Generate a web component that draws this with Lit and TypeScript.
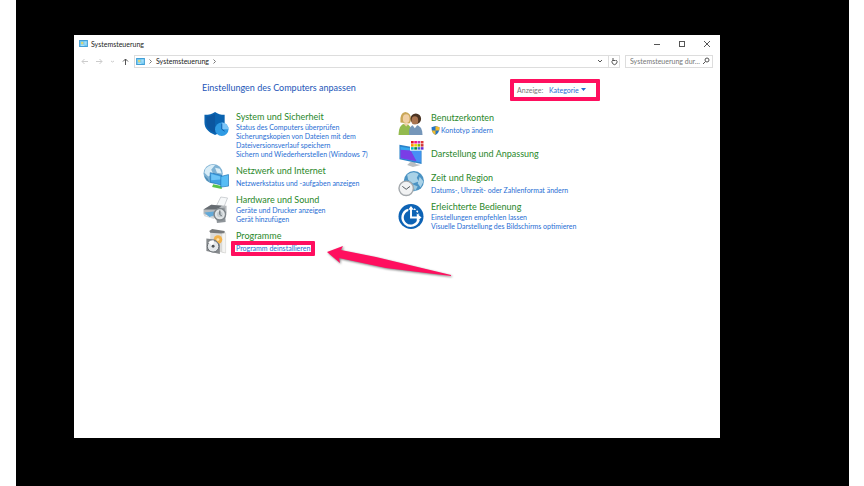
import { LitElement, html, svg, css, nothing, TemplateResult, SVGTemplateResult } from "lit";
import { customElement, property } from "lit/decorators.js";

interface Category {
  title: string;
  icon: string;
  links: string[];
  shield?: boolean;
  marked?: boolean;
  top?: boolean;
}

const LEFT: Category[] = [
  {
    title: "System und Sicherheit",
    icon: "security",
    top: true,
    links: [
      "Status des Computers überprüfen",
      "Sicherungskopien von Dateien mit dem Dateiversionsverlauf speichern",
      "Sichern und Wiederherstellen (Windows 7)",
    ],
  },
  { title: "Netzwerk und Internet", icon: "network", links: ["Netzwerkstatus und -aufgaben anzeigen"] },
  { title: "Hardware und Sound", icon: "hardware", links: ["Geräte und Drucker anzeigen", "Gerät hinzufügen"] },
  { title: "Programme", icon: "programs", links: ["Programm deinstallieren"], marked: true },
];

const RIGHT: Category[] = [
  { title: "Benutzerkonten", icon: "users", links: ["Kontotyp ändern"], shield: true },
  { title: "Darstellung und Anpassung", icon: "display", links: [] },
  { title: "Zeit und Region", icon: "clock", links: ["Datums-, Uhrzeit- oder Zahlenformat ändern"] },
  {
    title: "Erleichterte Bedienung",
    icon: "access",
    links: ["Einstellungen empfehlen lassen", "Visuelle Darstellung des Bildschirms optimieren"],
  },
];

const swatches = ["#e81123", "#f01a8c", "#c239b3", "#e23838", "#ff8c00", "#e8d100", "#7fba00", "#d13438", "#00b7c3", "#10893e", "#3b6be0", "#6b2fd0"];

const ICONS: Record<string, SVGTemplateResult> = {
  security: svg`
    <path d="M2 4 C7 4 10 3 13 1 C16 3 19 4 23 4 V12 C23 19 19 22 13 25 C6 22 2 18 2 12Z" fill="#0a63b0"/>
    <path d="M4 6 C8 5.500 10.500 4 13 3 V22.500 C7 20 4 17 4 12Z" fill="#0b56a0"/>
    <circle cx="20" cy="19" r="7" fill="#2f9be4"/>
    <path d="M20 12 A7 7 0 0 1 27 19 H20Z" fill="#7cc6f8"/>
    <path d="M20 13 V19 L23 21" stroke="#0b5cab" fill="none"/>`,
  network: svg`
    <circle cx="11" cy="10" r="10" fill="#7fb2d4"/>
    <path d="M3 5 Q8 0 13 1 L9 6 L11 10 L6 13 L2 9Z M13 4 L18 5 L20 10 L15 9Z" fill="#d9edf7"/>
    <path d="M2 12 Q6 15 7 19 Q3 17 2 12Z" fill="#4c8bb5"/>
    <path d="M11 21 L20 23 V26 L10 24Z" fill="#59c34a"/>
    <path d="M8 9 L20 12 V22 L8 19Z" fill="#3f9fe2" stroke="#1e74b8" stroke-width=".7"/>
    <path d="M19 13 L27 11 V23 L19 24Z" fill="#58bdf5" stroke="#1d74b8" stroke-width=".7"/>
    <path d="M9 10.500 L18.500 13 V16 L9 17Z" fill="#6cc4f7"/>`,
  hardware: svg`
    <path d="M14 10 L19 0 L26 1 L22 11Z" fill="#f7f9fa" stroke="#b9bec2" stroke-width=".7"/>
    <path d="M1 13 L9 8 L25 9 V17 L12 21 L1 18Z" fill="#b6babd"/>
    <path d="M1 13 L9 8 L20 9 L15 13Z" fill="#666c72"/>
    <path d="M2 16 L12 15 L15 18 L7 21Z" fill="#62a9d8"/>
    <path d="M1 18 L8 21 L12 20 V23 L2 20Z" fill="#d2d6d8"/>
    <path d="M13 13 L23 11 L24 26 L15 27Z" fill="#8f959a"/>
    <circle cx="18" cy="18" r="6" fill="#e0e4e6" stroke="#7f868b" stroke-width="1.500"/>
    <circle cx="18" cy="18" r="3" fill="#c5ccd0"/><path d="M18 14 V18 L20 20" stroke="#4e565b" fill="none"/>`,
  programs: svg`
    <path d="M8 3 L23 4 V25 L18 24 L8 22Z" fill="#dcdcda"/>
    <path d="M7 2 L10 0 L23 2 V5 L8 4Z" fill="#77797a"/>
    <path d="M20 5 L24 4 V25 L20 24Z" fill="#f4f4f2" stroke="#c9c9c7" stroke-width=".5"/>
    <circle cx="16" cy="11" r="4.500" fill="#f2b24a"/><circle cx="16" cy="11" r="1.500" fill="#fde3ae"/>
    <path d="M4 10 L13 11 L18 16 V26 L4 23Z" fill="#85898c"/>
    <circle cx="11" cy="18" r="6" fill="#e5e8ea" stroke="#64696d"/>
    <path d="M11 18 L6 14 A6 6 0 0 1 12 12Z" fill="#fff"/><circle cx="11" cy="18" r="1.500" fill="#505558"/>`,
  users: svg`
    <path d="M3 12 Q2 2 8 1 Q14 2 14 8 Q14 12 12 13Z" fill="#c9a758"/>
    <ellipse cx="9" cy="8" rx="3.500" ry="4.500" fill="#f0cfa4"/>
    <path d="M1 25 Q1 14 8 13 Q15 14 15 25Z" fill="#93ba4e"/>
    <path d="M6 13 L9 16 L12 13 Z" fill="#f0cfa4"/>
    <circle cx="19" cy="8" r="5.500" fill="#4a3323"/>
    <ellipse cx="18" cy="10" rx="3.500" ry="4.500" fill="#a97450"/>
    <path d="M12 25 Q11 15 18 14 Q26 15 26 25Z" fill="#7596b9"/>
    <path d="M15 14 L18 18 L21 14Z" fill="#fff"/>`,
  display: svg`
    <path d="M13 22 L18 21 L19 24 L24 25 L16 27 L10 25Z" fill="#b9bec2"/>
    <path d="M2 4 L25 8 V24 L2 19Z" fill="#2b82c9"/>
    <path d="M3 6 L24 9 V22 L3 18Z" fill="#35a9ef"/>
    <path d="M3 9 L14 10 L20 21 L3 18Z" fill="#7a3de6"/>
    <path d="M14 10 L24 11 V22 L20 21Z" fill="#478ef6"/>
    <rect x="13" y="0" width="15" height="10" fill="#fff"/>
    ${swatches.map((c, i) => svg`<rect x=${14 + (i % 4) * 3.4} y=${Math.floor(i / 4) * 3.2} width="2.800" height="2.600" fill=${c}/>`)}`,
  clock: svg`
    <circle cx="17" cy="10.500" r="10.500" fill="#4b93c3"/>
    <path d="M10 4 Q16 -1 22 3 L20 7 L22 11 L16 13 L11 9Z M23 6 L27 11 L24 17 L21 13Z" fill="#a9d2e7"/>
    <path d="M16 14 L21 16 L18 21Z" fill="#9ccae0"/>
    <circle cx="9" cy="18" r="7.500" fill="#f1f2f3" stroke="#a4a9ad" stroke-width="1.500"/>
    <path d="M5 16 L9 19 L13 16" stroke="#4d5459" fill="none"/>`,
  access: svg`
    <circle cx="14" cy="13" r="13" fill="#0d63b5"/>
    <path d="M11 6 A8.500 8.500 0 1 0 22 16" stroke="#fff" stroke-width="2.500" fill="none"/>
    <path d="M17 5 A9 9 0 0 1 22 11" stroke="#fff" stroke-width="1.500" stroke-dasharray="2 1.500" fill="none"/>
    <path d="M14 4 V14 H21" stroke="#fff" stroke-width="2" fill="none"/>
    <path d="M11 6 L14 2 L17 6Z M20 10 L25 14 L20 18Z" fill="#fff"/>`,
};

const panelIcon = html`<svg class="panel" viewBox="0 0 10 8" aria-hidden="true">
  <rect width="10" height="8" fill="#3c9ad3"/><rect x="1" y="1" width="8" height="6" fill="#6fc8f2"/>
  <circle cx="3.500" cy="3.500" r="1.500" fill="#d9d57c"/><path d="M6 2.500H8.500M6 4.500H8.500M2 6H6" stroke="#e4f6ff" stroke-width=".8"/>
</svg>`;

@customElement("cp-category")
class CpCategory extends LitElement {
  @property({ attribute: false }) data!: Category;

  static styles = css`
    :host { display: block; }
    .item { display: flex; align-items: center; gap: 6px; min-height: 25px; }
    .item.top { align-items: flex-start; }
    .icon { width: 28px; height: 25px; flex: none; overflow: visible; }
    .text { min-width: 0; }
    h2 { margin: 0; font-size: 9px; line-height: 12px; font-weight: 400; }
    a { text-decoration: none; }
    h2 a { color: #2a882a; }
    ul { list-style: none; margin: 0; padding: 0; font-size: 7px; line-height: 9px; }
    .single ul { margin-top: 2px; }
    li a { color: #1f6ed4; }
    .top ul { max-width: 150px; }
    .shield { width: 9px; height: 9px; margin-right: 1px; vertical-align: top; }
    .marked li { width: max-content; position: relative; }
    .marked li a { text-decoration: underline; }
    .frame { position: absolute; inset: -3px -5px; border: 4px solid #ff0f5f; border-radius: 1px; pointer-events: none; }
    .arrow { position: absolute; left: 90px; top: 0; width: 126px; height: 34px; pointer-events: none; filter: drop-shadow(1px 1px 1px #0008); }
  `;

  private overlay(): TemplateResult {
    return html`<span class="frame"></span>
      <svg class="arrow" viewBox="0 0 126 34" aria-hidden="true">
        <path d="M1 8 L17 2 L15 6 L50 13 L125 31 V32 L60 24 L13 14 L14 19Z" fill="#ff0f5f"/>
      </svg>`;
  }

  render() {
    const { title, icon, links, shield, marked, top } = this.data;
    const kind = `item ${top ? "top" : ""} ${links.length === 1 ? "single" : ""} ${marked ? "marked" : ""}`;
    return html`<section class=${kind}>
      <svg class="icon" viewBox="0 0 28 26" aria-hidden="true">${ICONS[icon]}</svg>
      <div class="text">
        <h2><a href="#">${title}</a></h2>
        ${links.length
          ? html`<ul>
              ${links.map(
                (l) => html`<li>${shield
                    ? html`<svg class="shield" viewBox="0 0 9 9" aria-hidden="true">
                        <path d="M4.500 0 L8.500 1.200 Q8.500 7 4.500 9 Q.5 7 .5 1.200Z" fill="#2474c4"/>
                        <path d="M4.500 0 L8.500 1.200 L8.300 4.500 H4.500Z M.7 4.500 H4.500 V9 Q1.500 7.500 .7 4.500Z" fill="#f3bb2c"/>
                      </svg>`
                    : nothing}<a href="#">${l}</a>${marked ? this.overlay() : nothing}</li>`
              )}
            </ul>`
          : nothing}
      </div>
    </section>`;
  }
}

@customElement("app-root")
class AppRoot extends LitElement {
  static styles = css`
    :host { display: block; background: #fff; font-family: Lato, "Open Sans", sans-serif; }
    * { box-sizing: border-box; }
    .stage { margin: 0 15px 0 16px; padding: 35px 129px 48px 58px; min-height: 100vh; background: #000; display: flex; }
    .window { flex: 1; min-width: 0; background: #fff; display: flex; flex-direction: column; }
    button { border: 0; padding: 0; background: none; display: flex; align-items: center; justify-content: center; }
    svg { flex: none; }
    .titlebar { display: flex; align-items: center; height: 17px; padding: 0 2px 0 5px; gap: 3px; }
    .titlebar h1 { margin: 0; flex: 1; font-size: 7px; line-height: 10px; font-weight: 400; color: #222; }
    .titlebar button { width: 22px; height: 14px; }
    .glyph { width: 8px; height: 8px; fill: none; stroke: #555; }
    .panel { width: 9px; height: 7px; }
    .toolbar { display: flex; align-items: center; height: 20px; padding: 0 7px 2px 6px; }
    .nav { display: flex; gap: 6px; width: 54px; }
    .nav .glyph, .refresh .glyph { width: 9px; height: 9px; }
    .nav .glyph.small { width: 5px; }
    .glyph.pale { stroke: #ccc; }
    .address { flex: 1; display: flex; align-items: center; gap: 4px; height: 13px; border: 1px solid #ddd; padding-left: 1px; font-size: 7px; line-height: 10px; }
    .address a { color: #222; text-decoration: none; }
    .chev { width: 3px; height: 5px; fill: none; stroke: #777; }
    .address .drop { margin-left: auto; width: 8px; }
    .refresh { width: 11px; align-self: stretch; border-left: 1px solid #ddd; }
    .search { display: flex; align-items: center; width: 88px; height: 13px; margin-left: 5px; border: 1px solid #ddd; padding: 0 2px 0 4px; }
    .search input { flex: 1; min-width: 0; border: 0; padding: 0; outline: 0; font: 7px/10px Lato, sans-serif; background: none; }
    .search input::placeholder { color: #777; opacity: 1; }
    .content { padding: 7px 0 0 128px; }
    .head { display: flex; align-items: flex-start; justify-content: space-between; width: 398px; height: 32px; }
    .head h2 { margin: 3px 0 0; font-size: 9px; line-height: 12px; font-weight: 400; color: #2456b8; }
    .view { display: flex; align-items: center; width: 90px; height: 22px; border: 4px solid #ff0f5f; border-radius: 1px; padding: 0 0 1px 3px; font-size: 7px; line-height: 10px; }
    .view label { color: #777; width: 32px; }
    .view select { appearance: none; border: 0; padding: 0; margin: 0; background: none; color: #1f6ed4; font: 7px/10px Lato, sans-serif; width: 32px; }
    .caret { width: 5px; height: 3px; fill: #1f6ed4; }
    .columns { display: grid; grid-template-columns: 195px 195px; }
    .col { display: grid; gap: 5px; align-content: start; }
  `;

  render() {
    return html`<div class="stage">
      <main class="window">
        <header class="titlebar">
          ${panelIcon}
          <h1>Systemsteuerung</h1>
          <button aria-label="Minimieren"><svg class="glyph" viewBox="0 0 8 8"><path d="M1 4.500H7"/></svg></button>
          <button aria-label="Maximieren"><svg class="glyph" viewBox="0 0 8 8"><rect x="1.500" y="1.500" width="5" height="5"/></svg></button>
          <button aria-label="Schließen"><svg class="glyph" viewBox="0 0 8 8"><path d="M1 1L7 7M7 1L1 7"/></svg></button>
        </header>
        <div class="toolbar">
          <div class="nav">
            <button aria-label="Zurück"><svg class="glyph pale" viewBox="0 0 9 9"><path d="M8 4.500H2M4.500 2L2 4.500L4.500 7"/></svg></button>
            <button aria-label="Vorwärts"><svg class="glyph pale" viewBox="0 0 9 9"><path d="M1 4.500H7M4.500 2L7 4.500L4.500 7"/></svg></button>
            <button aria-label="Verlauf"><svg class="glyph pale small" viewBox="0 0 5 9"><path d="M1 4L2.500 5L4 4"/></svg></button>
            <button aria-label="Nach oben"><svg class="glyph" viewBox="0 0 9 9"><path d="M4.500 8V2M2 4.500L4.500 2L7 4.500"/></svg></button>
          </div>
          <nav class="address" aria-label="Adresse">
            ${panelIcon}
            <svg class="chev" viewBox="0 0 3 5"><path d="M.5 .5L2.500 2.500L.5 4.500"/></svg>
            <a href="#">Systemsteuerung</a>
            <svg class="chev" viewBox="0 0 3 5"><path d="M.5 .5L2.500 2.500L.5 4.500"/></svg>
            <button class="drop" aria-label="Vorherige Orte"><svg class="glyph" viewBox="0 0 8 8"><path d="M2 3L4 5L6 3"/></svg></button>
            <button class="refresh" aria-label="Aktualisieren"><svg class="glyph" viewBox="0 0 9 9"><path d="M3 3A2.500 2.500 0 1 0 6 3M3 1V3.500H5.500"/></svg></button>
          </nav>
          <div class="search">
            <input type="text" aria-label="Systemsteuerung durchsuchen" placeholder="Systemsteuerung dur..." />
            <svg class="glyph" viewBox="0 0 8 8"><circle cx="5" cy="3" r="2"/><path d="M3.500 4.500L1 7"/></svg>
          </div>
        </div>
        <div class="content">
          <div class="head">
            <h2>Einstellungen des Computers anpassen</h2>
            <div class="view">
              <label for="view">Anzeige:</label>
              <select id="view"><option>Kategorie</option></select>
              <svg class="caret" viewBox="0 0 5 3"><path d="M0 0H5L2.500 3Z"/></svg>
            </div>
          </div>
          <div class="columns">
            <div class="col">${LEFT.map((c) => html`<cp-category .data=${c}></cp-category>`)}</div>
            <div class="col">${RIGHT.map((c) => html`<cp-category .data=${c}></cp-category>`)}</div>
          </div>
        </div>
      </main>
    </div>`;
  }
}
